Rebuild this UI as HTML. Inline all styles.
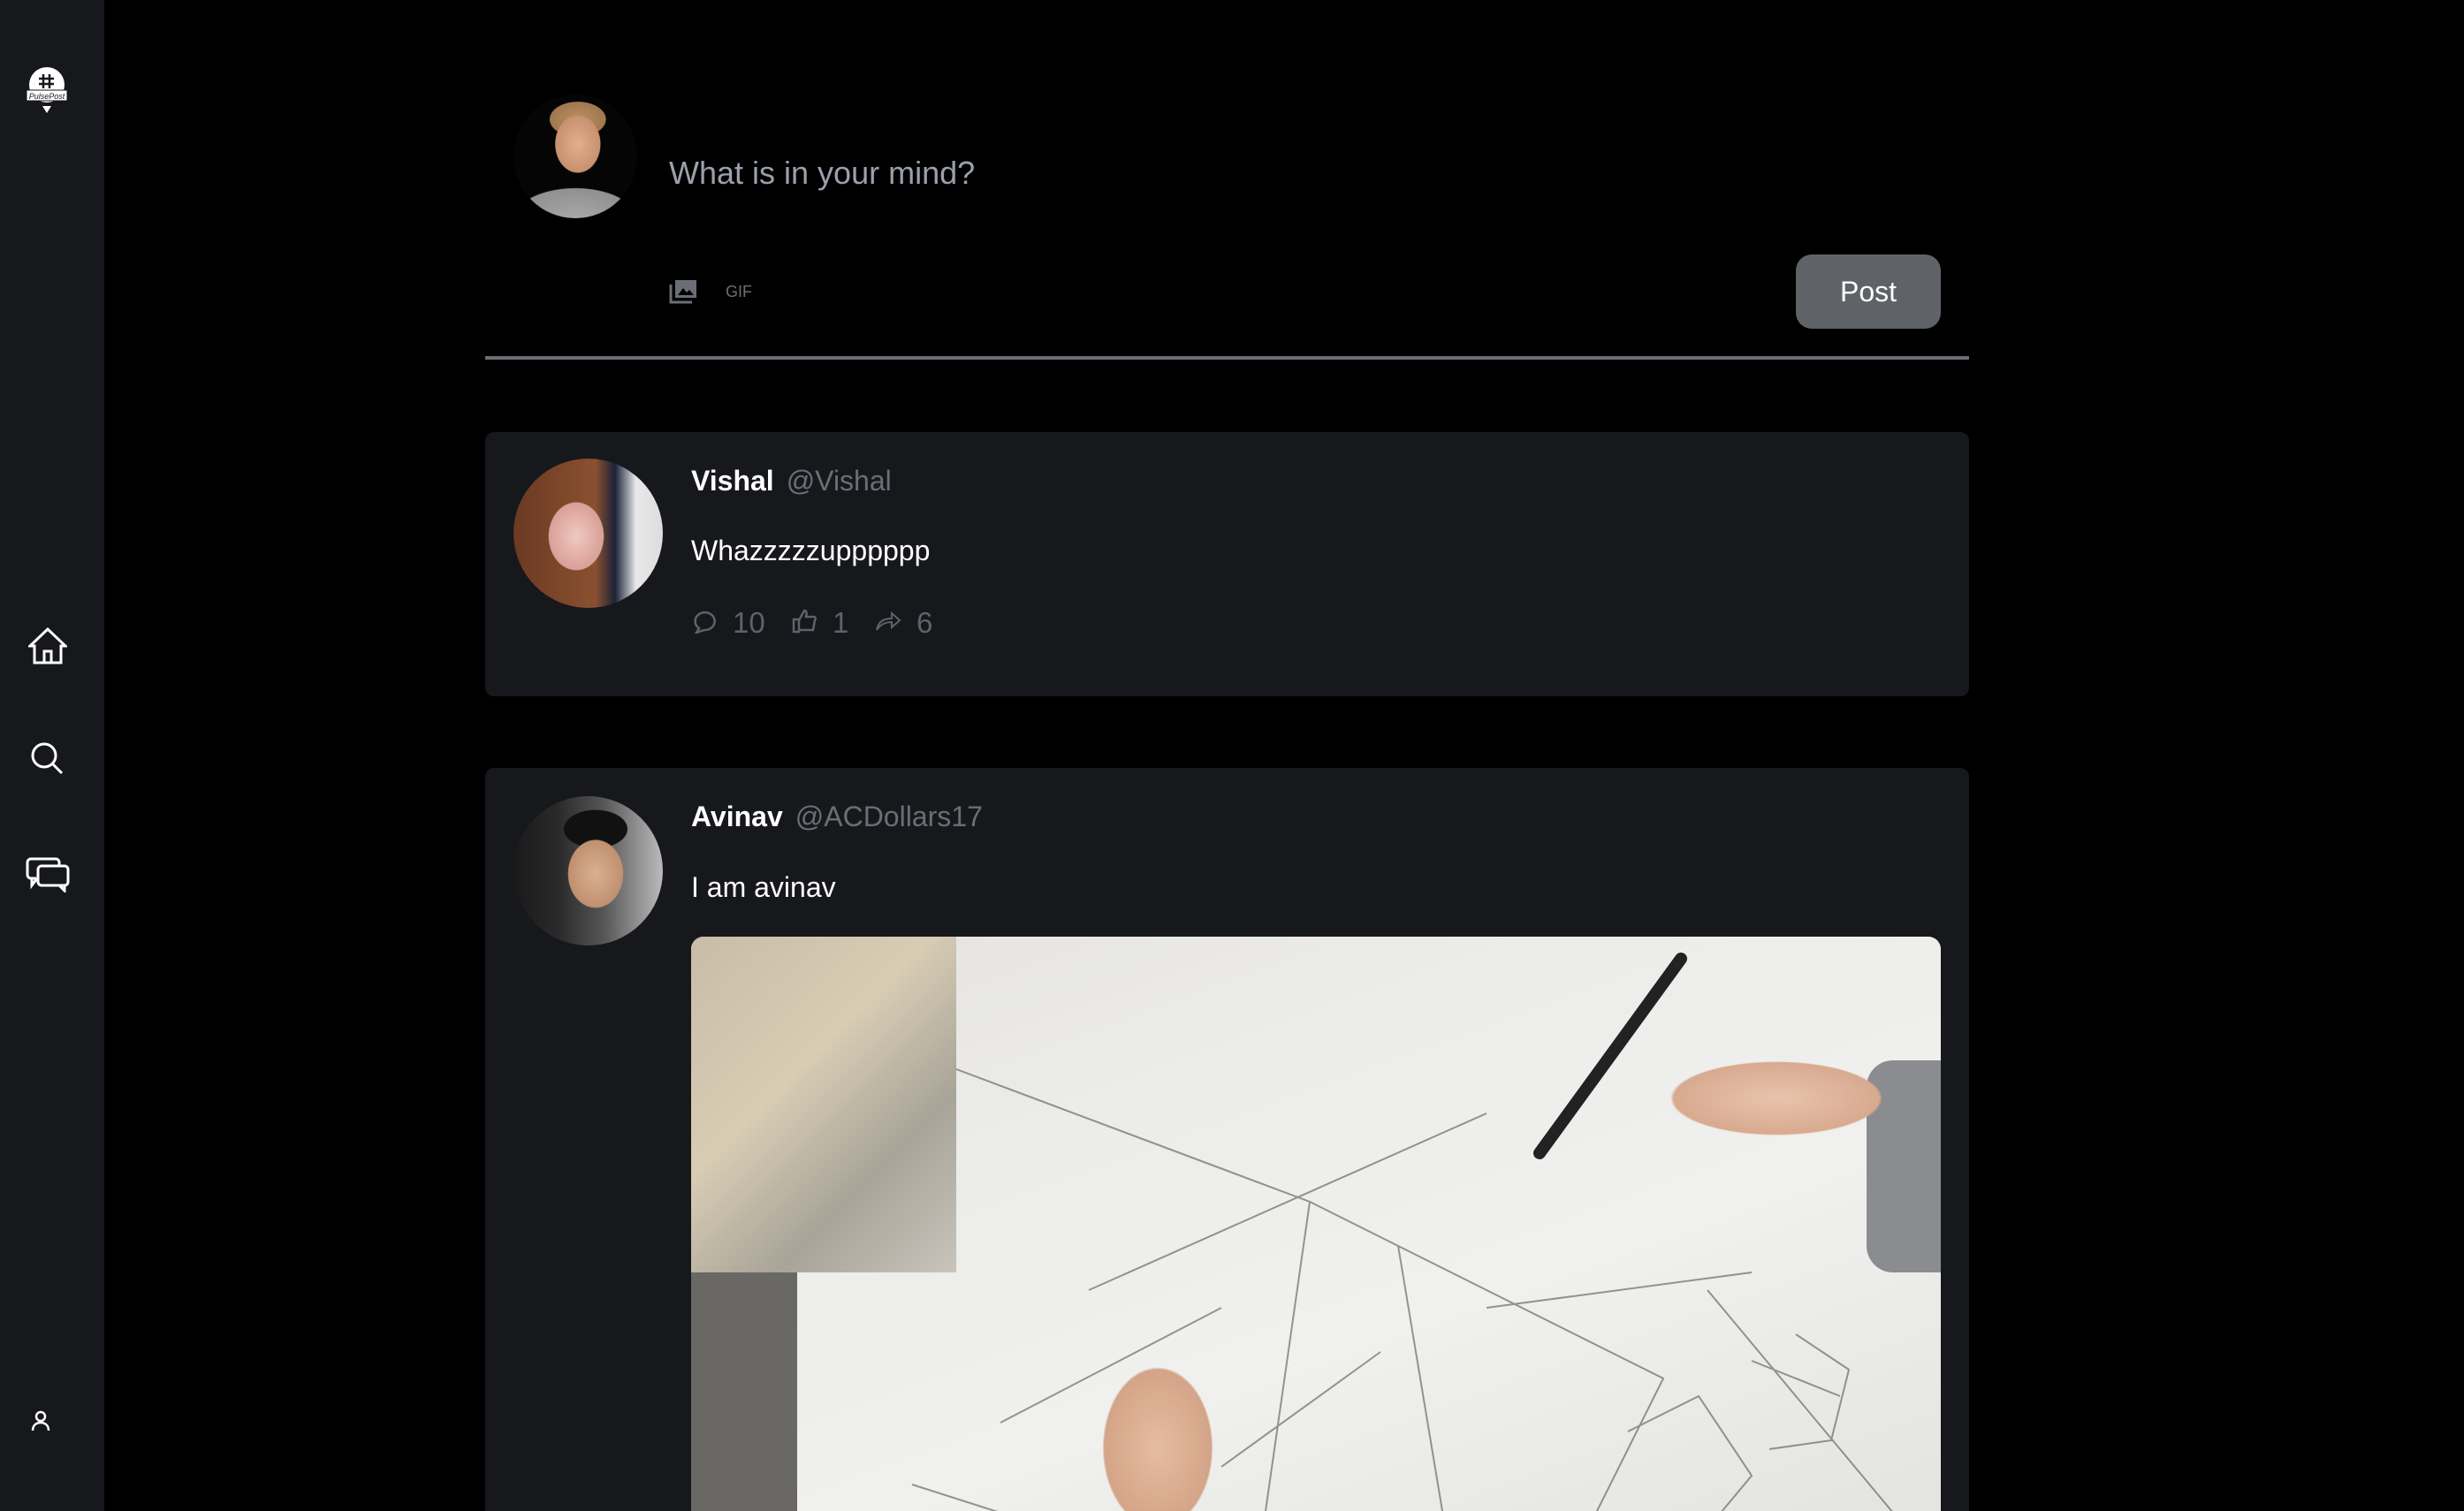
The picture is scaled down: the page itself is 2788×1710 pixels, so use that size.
<!DOCTYPE html>
<html><head><meta charset="utf-8"><style>
*{margin:0;padding:0;box-sizing:border-box}
html,body{width:2788px;height:1710px;overflow:hidden}
body{background:#000;position:relative;font-family:"Liberation Sans",sans-serif}
.side{position:absolute;left:0;top:0;width:118px;height:1710px;background:#17181c}
.abs{position:absolute}
.card{position:absolute;left:549px;width:1679px;background:#17181c;border-radius:10px}
.av{position:absolute;border-radius:50%;overflow:hidden}
.name{position:absolute;font-size:32px;font-weight:bold;color:#fff}
.name span{font-weight:normal;color:#6b6e75;margin-left:14px}
.txt{position:absolute;font-size:32px;color:#fff}
.act{position:absolute;font-size:33px;color:#5f626a}
</style></head><body>
<div class="side">
 <svg class="abs" style="left:28px;top:74px" width="50" height="54" viewBox="0 0 50 54">
  <circle cx="25" cy="22" r="20" fill="#fff"/>
  <path d="M20 46 L25 54 L30 46Z" fill="#fff"/>
  <rect x="2" y="28" width="46" height="12" fill="#fff" stroke="#17181c" stroke-width="1"/>
  <text x="25" y="38" font-size="9" font-style="italic" text-anchor="middle" fill="#17181c" font-family="Liberation Sans">PulsePost</text>
  <path d="M21 10v16M28 10v16M16 15h17M16 21h17" stroke="#17181c" stroke-width="2.5"/>
 </svg>
 <svg class="abs" style="left:32px;top:710px" width="44" height="42" viewBox="0 0 44 42" fill="none" stroke="#fff" stroke-width="3">
  <path d="M2 21 L22 2 L42 21 H37 V40 H7 V21Z"/><path d="M18 40V27h8v13"/>
 </svg>
 <svg class="abs" style="left:33px;top:838px" width="40" height="40" viewBox="0 0 40 40" fill="none" stroke="#fff" stroke-width="3">
  <circle cx="17" cy="17" r="13"/><path d="M27 27L37 37"/>
 </svg>
 <svg class="abs" style="left:29px;top:970px" width="50" height="40" viewBox="0 0 50 40" fill="none" stroke="#fff" stroke-width="3">
  <path d="M6 2h28a4 4 0 0 1 4 4v4M12 24H6a4 4 0 0 1-4-4V6a4 4 0 0 1 4-4"/><path d="M7 24v8l6-8"/>
  <rect x="14" y="10" width="34" height="22" rx="4"/><path d="M38 32l6 6v-6"/>
 </svg>
 <svg class="abs" style="left:35px;top:1596px" width="22" height="24" viewBox="0 0 22 24" fill="none" stroke="#fff" stroke-width="2.5">
  <circle cx="11" cy="7" r="5"/><path d="M2 23c0-6 4-9 9-9s9 3 9 9"/>
 </svg>
</div>

<div class="av" style="left:581px;top:107px;width:140px;height:140px;background:radial-gradient(ellipse 30% 38% at 52% 40%,#e0b08a 0,#c89070 60%,transparent 62%),radial-gradient(ellipse 32% 20% at 52% 20%,#b89060 0,#a07850 70%,transparent 72%),radial-gradient(ellipse 60% 30% at 50% 100%,#a8a8a8 0,#909090 80%,transparent 82%),#050505"></div>
<div class="abs" style="left:757px;top:175px;font-size:36px;color:#9ba0aa">What is in your mind?</div>
<svg class="abs" style="left:757px;top:316px" width="32" height="28" viewBox="0 0 32 28"><path d="M2 6v20h24" stroke="#6b6e75" stroke-width="3" fill="none"/><rect x="7" y="1" width="24" height="20" fill="#6b6e75"/><path d="M10 18l6-8 4 5 3-3 5 6z" fill="#000"/></svg>
<div class="abs" style="left:821px;top:320px;font-size:18px;color:#6b6e75">GIF</div>
<div class="abs" style="left:2032px;top:288px;width:164px;height:84px;background:#5f6267;border-radius:18px;color:#fff;font-size:32px;text-align:center;line-height:84px">Post</div>
<div class="abs" style="left:549px;top:403px;width:1679px;height:4px;background:#6b6e75"></div>

<div class="card" style="top:489px;height:299px"></div>
<div class="av" style="left:581px;top:519px;width:169px;height:169px;background:radial-gradient(ellipse 26% 32% at 42% 52%,#f0c8c0 0,#d8a098 70%,transparent 72%),linear-gradient(90deg,#6a3a22 0,#8a5030 55%,#1a2238 68%,#e8e8e8 82%,#ddd 100%)"></div>
<div class="name" style="left:782px;top:526px">Vishal<span>@Vishal</span></div>
<div class="txt" style="left:782px;top:605px">Whazzzzzupppppp</div>
<svg class="abs" style="left:783px;top:689px" width="28" height="28" viewBox="0 0 28 28" fill="none" stroke="#5f626a" stroke-width="2.5"><path d="M8 22A11 10 0 1 1 14 24L5 27Z"/></svg>
<div class="act" style="left:829px;top:686px">10</div>
<svg class="abs" style="left:896px;top:689px" width="28" height="28" viewBox="0 0 28 28" fill="none" stroke="#5f626a" stroke-width="2.5"><path d="M2 12h6v14H2zM8 13l6-11c3 0 3 3 2 7h9c2 0 2 3 1 4l-2 11H8"/></svg>
<div class="act" style="left:942px;top:686px">1</div>
<svg class="abs" style="left:990px;top:691px" width="30" height="24" viewBox="0 0 30 24" fill="none" stroke="#5f626a" stroke-width="2"><path d="M2 22C4 12 10 9 19 9V3l9 8-9 8v-6C11 13 6 16 2 22Z"/></svg>
<div class="act" style="left:1037px;top:686px">6</div>

<div class="card" style="top:869px;height:860px;border-radius:10px 10px 0 0"></div>
<div class="av" style="left:581px;top:901px;width:169px;height:169px;background:radial-gradient(ellipse 26% 32% at 55% 52%,#d8b090 0,#c09070 70%,transparent 72%),radial-gradient(ellipse 30% 18% at 55% 22%,#111 0,#111 70%,transparent 72%),linear-gradient(90deg,#1a1a1a 0,#2a2a2a 30%,#555 60%,#bbb 100%)"></div>
<div class="name" style="left:782px;top:906px">Avinav<span>@ACDollars17</span></div>
<div class="txt" style="left:782px;top:986px">I am avinav</div>
<div class="abs" style="left:782px;top:1060px;width:1414px;height:700px;border-radius:14px 14px 0 0;overflow:hidden;background:linear-gradient(160deg,#e4e2de 0,#ececea 30%,#f0f0ee 60%,#e2e2e0 100%)">
 <div class="abs" style="left:0;top:0;width:300px;height:380px;background:linear-gradient(135deg,#c8bca8,#d8ccb4 40%,#a8a498 70%,#c8c4bc)"></div>
 <div class="abs" style="left:0;top:380px;width:120px;height:320px;background:#6a6864"></div>
 <div class="abs" style="left:1330px;top:140px;width:84px;height:240px;background:#8a8c90;border-radius:30px 0 0 30px"></div>
 <svg class="abs" style="left:0;top:0" width="1414" height="700" fill="none" stroke="#555" stroke-width="2" opacity=".6">
  <path d="M300 150L700 300L650 650M450 400L900 200M700 300L1100 500L1000 700M800 350L850 650M900 420L1200 380M1150 400L1400 700M1200 480L1300 520M350 550L600 420M250 620L500 700M600 600L780 470"/>
  <path d="M1250 450l60 40-20 80-70 10M1060 560l80-40 60 90-50 60"/>
 </svg>
 <div class="abs" style="left:920px;top:40px;width:440px;height:260px;background:radial-gradient(ellipse 44% 26% at 70% 55%,#e8c4ac 0,#d8aa90 60%,transparent 62%)"></div>
 <svg class="abs" style="left:900px;top:15px" width="240" height="260"><path d="M220 10L60 230" stroke="#222" stroke-width="14" stroke-linecap="round"/></svg>
 <div class="abs" style="left:360px;top:380px;width:280px;height:320px;background:radial-gradient(ellipse 36% 46% at 60% 62%,#e6bca0 0,#d4a488 60%,transparent 62%)"></div>
</div>
</body></html>
